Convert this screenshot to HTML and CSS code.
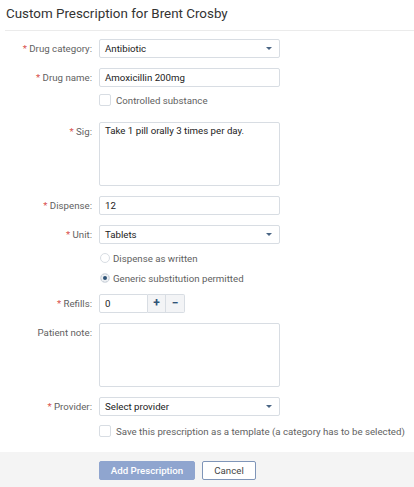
FILE: index.html
```html
<!DOCTYPE html>
<html lang="en">

<head>
  <meta charset="UTF-8" />
  <meta name="viewport" content="width=device-width, initial-scale=1.0" />
  <title>Custom Prescription</title>
  <link rel="stylesheet" href="styles.css">
</head>

<body>
  <div class="modal">
    <div class="modal-header">
      <h2>Custom Prescription for Brent Crosby</h2>
    </div>

    <form class="rx-form">
      <div class="row row-first">
        <label class="field-label"><span class="req">*</span> Drug category:</label>
        <div class="select">Antibiotic<span class="caret"></span></div>
      </div>

      <div class="row">
        <label class="field-label"><span class="req">*</span> Drug name:</label>
        <div class="input">Amoxicillin 200mg</div>
      </div>

      <div class="row row-check">
        <span class="field-label"></span>
        <label class="check"><span class="box"></span>Controlled substance</label>
      </div>

      <div class="row row-sig">
        <label class="field-label"><span class="req">*</span> Sig:</label>
        <div class="input textarea">Take 1 pill orally 3 times per day.</div>
      </div>

      <div class="row">
        <label class="field-label"><span class="req">*</span> Dispense:</label>
        <div class="input">12</div>
      </div>

      <div class="row">
        <label class="field-label"><span class="req">*</span> Unit:</label>
        <div class="select">Tablets<span class="caret"></span></div>
      </div>

      <div class="row row-radio1">
        <span class="field-label"></span>
        <label class="radio"><span class="dot"></span>Dispense as written</label>
      </div>

      <div class="row row-radio2">
        <span class="field-label"></span>
        <label class="radio checked"><span class="dot"></span>Generic substitution permitted</label>
      </div>

      <div class="row row-refills">
        <label class="field-label"><span class="req">*</span> Refills:</label>
        <div class="stepper">
          <div class="input small">0</div>
          <button type="button" class="step">+</button>
          <button type="button" class="step">&minus;</button>
        </div>
      </div>

      <div class="row">
        <label class="field-label">Patient note:</label>
        <div class="input textarea"></div>
      </div>

      <div class="row">
        <label class="field-label"><span class="req">*</span> Provider:</label>
        <div class="select">Select provider<span class="caret"></span></div>
      </div>

      <div class="row row-template">
        <span class="field-label"></span>
        <label class="check"><span class="box"></span>Save this prescription as a template (a category has to be selected)</label>
      </div>
    </form>

    <div class="modal-footer">
      <button type="button" class="btn btn-primary">Add Prescription</button>
      <button type="button" class="btn btn-default">Cancel</button>
    </div>
  </div>
</body>

</html>
```

FILE: styles.css
```css
:root {
  --text-color: #333;
  --label-color: #616161;
  --border-color: #d8dde3;
  --req-color: #d9534f;
  --primary-color: #8fa5cf;
  --accent-color: #2f5377;
  --small-font: 9.7px;
}

* {
  box-sizing: border-box;
}

html,
body {
  margin: 0;
  padding: 0;
  background: #fff;
  font-family: Roboto, 'Liberation Sans', sans-serif;
  color: var(--text-color);
}

.modal-header {
  margin-left: 5px;
  height: 31px;
  border-bottom: 1px solid #ebebeb;
}

.modal-header h2 {
  margin: 0;
  padding: 5px 0 0 1px;
  font-size: 13.4px;
  line-height: 18px;
  font-weight: 400;
  color: #333;
}

.rx-form {
  display: flex;
  flex-direction: column;
}

.row {
  display: flex;
  align-items: flex-start;
  margin-top: 10px;
}

.row-first {
  margin-top: 8px;
}

.field-label {
  width: 92px;
  flex-shrink: 0;
  margin-right: 7px;
  text-align: right;
  font-size: var(--small-font);
  line-height: 19px;
  color: var(--label-color);
}

.req {
  color: var(--req-color);
}

.input,
.select {
  position: relative;
  width: 181px;
  height: 19px;
  padding: 0 5px;
  border: 1px solid var(--border-color);
  border-radius: 2px;
  font-size: var(--small-font);
  line-height: 17px;
  color: #222;
  background: #fff;
}

.textarea {
  height: 64px;
  line-height: 14px;
  padding-top: 1px;
}

.caret {
  position: absolute;
  right: 7px;
  top: 7px;
  width: 0;
  height: 0;
  border-left: 3px solid transparent;
  border-right: 3px solid transparent;
  border-top: 3px solid #4a6584;
}

.row-check {
  margin-top: 5px;
}

.row-sig {
  margin-top: 14px;
}

.check,
.radio {
  display: flex;
  align-items: center;
  height: 16px;
  font-size: var(--small-font);
  color: var(--label-color);
  white-space: nowrap;
}

.box {
  width: 12px;
  height: 12px;
  margin-right: 5px;
  border: 1px solid var(--border-color);
  border-radius: 2px;
  background: #fff;
}

.row-radio1 {
  margin-top: 6px;
}

.row-radio2 {
  margin-top: 4px;
}

.radio .dot {
  width: 10px;
  height: 10px;
  margin: 0 3px 0 1px;
  border: 1px solid var(--border-color);
  border-radius: 50%;
  background: #fff;
}

.radio.checked .dot {
  background: #eef0f3;
  box-shadow: inset 0 0 0 2px #eef0f3, inset 0 0 0 5px var(--accent-color);
}

.row-refills {
  margin-top: 8px;
}

.stepper {
  display: flex;
  height: 19px;
}

.input.small {
  width: 49px;
  border-radius: 2px 0 0 2px;
}

.step {
  width: 18px;
  height: 19px;
  margin: 0;
  padding: 0;
  border: 1px solid var(--border-color);
  border-left: none;
  background: #f3f4f6;
  font-family: inherit;
  font-size: 12px;
  font-weight: 700;
  line-height: 17px;
  color: var(--accent-color);
}

.step:last-child {
  width: 19px;
  border-radius: 0 2px 2px 0;
}

.row-template {
  margin-top: 7px;
}

.modal-footer {
  display: flex;
  gap: 7px;
  margin-top: 13px;
  height: 35px;
  padding: 9px 0 0 99px;
  background: #f4f4f4;
}

.btn {
  height: 19px;
  padding: 0;
  border-radius: 2px;
  font-family: inherit;
  font-size: var(--small-font);
  line-height: 17px;
  cursor: pointer;
}

.btn-primary {
  width: 96px;
  border: 1px solid var(--primary-color);
  background: var(--primary-color);
  color: #fff;
  font-weight: 500;
}

.btn-default {
  width: 54px;
  border: 1px solid #7f95b8;
  background: #fff;
  color: #444;
}
```
